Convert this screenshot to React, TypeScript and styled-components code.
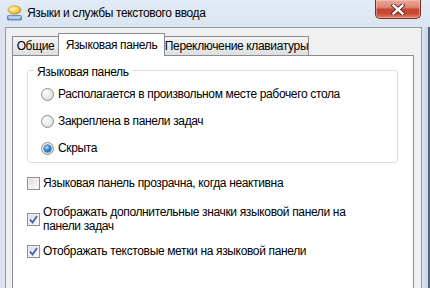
import React from "react";
import styled, { createGlobalStyle } from "styled-components";

const GlobalStyle = createGlobalStyle`
  html, body {
    margin: 0;
    padding: 0;
    background: #ffffff;
  }
  body {
    font-family: "Liberation Sans", Arial, sans-serif;
    font-size: 12px;
    color: #000;
  }
`;

type TabDef = { label: string; width: number; active?: boolean };

const tabs: TabDef[] = [
  { label: "Общие", width: 47 },
  { label: "Языковая панель", width: 107, active: true },
  { label: "Переключение клавиатуры", width: 145 },
];

const radios = [
  { label: "Располагается в произвольном месте рабочего стола", checked: false },
  { label: "Закреплена в панели задач", checked: false },
  { label: "Скрыта", checked: true },
];

const checks = [
  { label: "Языковая панель прозрачна, когда неактивна", checked: false },
  {
    label: "Отображать дополнительные значки языковой панели на панели задач",
    checked: true,
  },
  { label: "Отображать текстовые метки на языковой панели", checked: true },
];

const AppIcon = () => (
  <svg width="17" height="16" viewBox="0 0 17 16">
    <defs>
      <radialGradient id="bulb" cx="40%" cy="35%" r="65%">
        <stop offset="0%" stopColor="#fff6c8" />
        <stop offset="60%" stopColor="#f3cf55" />
        <stop offset="100%" stopColor="#c9962a" />
      </radialGradient>
      <linearGradient id="kbd" x1="0" y1="0" x2="0" y2="1">
        <stop offset="0%" stopColor="#bcd6f2" />
        <stop offset="100%" stopColor="#4f86c6" />
      </linearGradient>
    </defs>
    <ellipse cx="8.5" cy="5" rx="6.5" ry="4.2" fill="url(#bulb)" stroke="#b98a2a" strokeWidth="0.6" />
    <path d="M7 8.5 L8.5 10.5 L10 8.5 Z" fill="#e3b94a" />
    <rect x="1.5" y="10.5" width="14" height="4.5" rx="0.8" fill="url(#kbd)" stroke="#3e6ea8" strokeWidth="0.7" />
    <path d="M3 12.3 H14 M3 13.7 H14" stroke="#e8f1fb" strokeWidth="0.6" />
  </svg>
);

const CloseGlyph = () => (
  <svg width="14" height="11" viewBox="0 0 14 11">
    <path
      d="M2.5 1.5 L11.5 9.5 M11.5 1.5 L2.5 9.5"
      stroke="#5a1e16"
      strokeWidth="4.2"
      strokeLinecap="square"
    />
    <path
      d="M2.5 1.5 L11.5 9.5 M11.5 1.5 L2.5 9.5"
      stroke="#ffffff"
      strokeWidth="2.4"
      strokeLinecap="square"
    />
  </svg>
);

const CheckMark = () => (
  <svg width="9" height="9" viewBox="0 0 9 9">
    <path d="M1 4.5 L3.5 7.5 L8 1" stroke="#3b5db0" strokeWidth="1.7" fill="none" />
  </svg>
);

export default function App() {
  return (
    <>
      <GlobalStyle />
      <Window>
        <TitleBar>
          <IconSlot>
            <AppIcon />
          </IconSlot>
          <Title>Языки и службы текстового ввода</Title>
          <CloseButton>
            <CloseGlyph />
          </CloseButton>
        </TitleBar>
        <Body>
          <LeftFrame />
          <Client>
            <TabStrip>
              <TabLead />
              {tabs.map((t) => (
                <Tab key={t.label} $width={t.width} $active={!!t.active}>
                  {t.label}
                </Tab>
              ))}
            </TabStrip>
            <Panel>
              <GroupBox>
                <Legend>Языковая панель</Legend>
                {radios.map((r) => (
                  <RadioRow key={r.label}>
                    <RadioCircle $checked={r.checked}>{r.checked && <RadioDot />}</RadioCircle>
                    <span>{r.label}</span>
                  </RadioRow>
                ))}
              </GroupBox>
              <CheckList>
                {checks.map((c) => (
                  <CheckRow key={c.label}>
                    <CheckBox>{c.checked && <CheckMark />}</CheckBox>
                    <CheckText>{c.label}</CheckText>
                  </CheckRow>
                ))}
              </CheckList>
            </Panel>
          </Client>
          <RightFrame />
        </Body>
      </Window>
    </>
  );
}

const Window = styled.div`
  width: 430px;
  height: 288px;
  display: flex;
  flex-direction: column;
  overflow: hidden;
  background: #dce6f1;
  font-family: "Liberation Sans", Arial, sans-serif;
  font-size: 12px;
  letter-spacing: -0.35px;
`;

const TitleBar = styled.div`
  height: 27px;
  flex: none;
  display: flex;
  align-items: flex-start;
  background: linear-gradient(to bottom, #e3ebf5 0%, #dbe5f1 100%);
`;

const IconSlot = styled.div`
  margin: 5px 0 0 6px;
  width: 17px;
  height: 16px;
`;

const Title = styled.div`
  margin: 6px 0 0 4px;
  font-size: 12px;
  line-height: 15px;
  color: #000;
`;

const CloseButton = styled.div`
  margin-left: auto;
  margin-right: 9px;
  width: 46px;
  height: 19px;
  box-sizing: border-box;
  border: 1px solid #7b2b20;
  border-top: none;
  border-radius: 0 0 5px 5px;
  display: flex;
  align-items: center;
  justify-content: center;
  background: linear-gradient(
    to bottom,
    #e9a999 0%,
    #dd8676 40%,
    #c8452f 52%,
    #c94a34 75%,
    #e0836c 100%
  );
  box-shadow: inset 0 0 0 1px rgba(255, 210, 200, 0.45);
`;

const Body = styled.div`
  flex: 1;
  display: flex;
  min-height: 0;
`;

const LeftFrame = styled.div`
  width: 5px;
  flex: none;
  background: #dbe4ee;
`;

const RightFrame = styled.div`
  width: 8px;
  flex: none;
  box-sizing: border-box;
  border-right: 2px solid #55657a;
  background: linear-gradient(to right, #dde7f2 0%, #c6d7ea 100%);
`;

const Client = styled.div`
  flex: 1;
  box-sizing: border-box;
  border: 1px solid #8d9aa9;
  border-bottom: none;
  background: #f0f0f0;
  padding: 5px 7px 0 6px;
  display: flex;
  flex-direction: column;
`;

const TabStrip = styled.div`
  height: 23px;
  display: flex;
  align-items: flex-end;
`;

const TabLead = styled.div`
  width: 1px;
`;

const Tab = styled.div<{ $width: number; $active: boolean }>`
  width: ${({ $width }) => $width}px;
  height: ${({ $active }) => ($active ? 23 : 20)}px;
  box-sizing: border-box;
  border: 1px solid #898c95;
  border-bottom: none;
  margin-left: -1px;
  display: flex;
  align-items: flex-start;
  justify-content: center;
  padding-top: ${({ $active }) => ($active ? 4 : 2)}px;
  line-height: 15px;
  white-space: nowrap;
  position: relative;
  z-index: ${({ $active }) => ($active ? 2 : 0)};
  background: ${({ $active }) =>
    $active ? "#ffffff" : "linear-gradient(to bottom, #f3f3f3 0%, #ebebeb 50%, #dcdcdc 100%)"};
`;

const Panel = styled.div`
  flex: 1;
  margin-top: -1px;
  position: relative;
  z-index: 1;
  background: #ffffff;
  border: 1px solid #898c95;
  border-bottom: none;
  padding: 14px 15px 0 14px;
`;

const GroupBox = styled.div`
  border: 1px solid #d5dfe5;
  border-radius: 3px;
  padding: 0 0 0 13px;
`;

const Legend = styled.div`
  width: fit-content;
  margin: -6px 0 1px -7px;
  padding: 0 3px;
  background: #ffffff;
  line-height: 15px;
  height: 15px;
`;

const RadioRow = styled.div`
  height: 27px;
  display: flex;
  align-items: center;
  gap: 4px;
  line-height: 15px;
`;

const RadioCircle = styled.div<{ $checked: boolean }>`
  width: 13px;
  height: 13px;
  box-sizing: border-box;
  border-radius: 50%;
  border: 1px solid #8e8f8f;
  background: radial-gradient(circle at 35% 30%, #ffffff 0%, #e8e8e8 55%, #cfcfcf 100%);
  display: flex;
  align-items: center;
  justify-content: center;
  flex: none;
`;

const RadioDot = styled.div`
  width: 7px;
  height: 7px;
  border-radius: 50%;
  background: radial-gradient(circle at 40% 35%, #b9e2fb 0%, #2c8ad8 45%, #0d4f94 100%);
  box-shadow: 0 0 0 0.5px #11386a;
`;

const CheckList = styled.div`
  margin-top: 13px;
  display: flex;
  flex-direction: column;
  gap: 15px;
`;

const CheckRow = styled.div`
  display: flex;
  align-items: center;
  gap: 3px;
  & + & + & {
    margin-top: -4px;
  }
`;

const CheckBox = styled.div`
  width: 13px;
  height: 13px;
  flex: none;
  box-sizing: border-box;
  border: 1px solid #8e8f8f;
  background: linear-gradient(135deg, #d8d8d8 0%, #ececec 50%, #fbfbfb 100%);
  box-shadow: inset 0 0 0 1px #f4f4f4;
  display: flex;
  align-items: center;
  justify-content: center;
`;

const CheckText = styled.div`
  line-height: 14px;
  max-width: 320px;
`;
